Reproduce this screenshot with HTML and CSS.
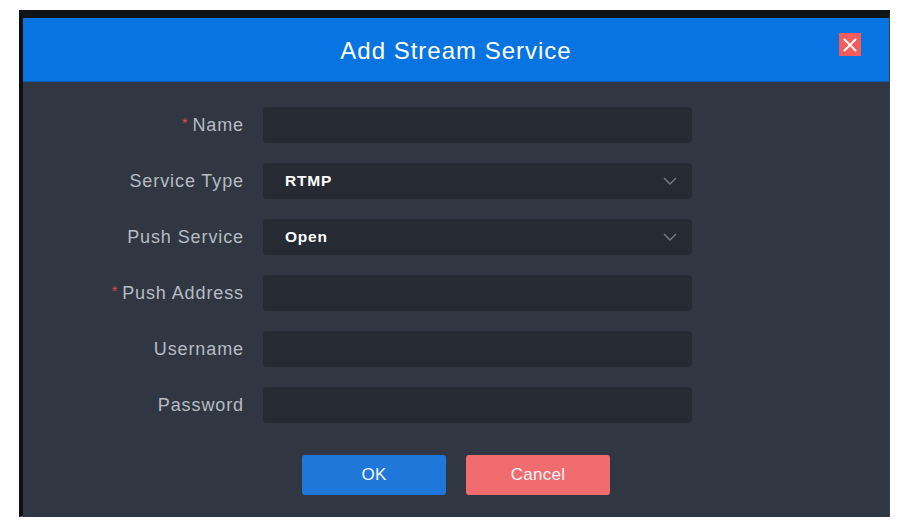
FILE: index.html
```html
<!DOCTYPE html>
<html>
<head>
<meta charset="utf-8">
<link rel="stylesheet" href="styles.css">
</head>
<body>
<div class="frame">
  <div class="dialog">
    <div class="header">
      <h1 class="title">Add Stream Service</h1>
      <button class="close" aria-label="close">
        <svg width="14" height="14" viewBox="0 0 14 14"><path d="M1.5 1.5 L12.5 12.5 M12.5 1.5 L1.5 12.5" stroke="#ffffff" stroke-width="2" fill="none" stroke-linecap="round"/></svg>
      </button>
    </div>
    <div class="body">
      <div class="row">
        <label class="label"><span class="req">*</span>Name</label>
        <div class="field"></div>
      </div>
      <div class="row">
        <label class="label">Service Type</label>
        <div class="field select"><span class="value">RTMP</span>
          <svg class="chev" width="14" height="8" viewBox="0 0 14 8"><polyline points="1,1 7,7 13,1" fill="none" stroke="#767c86" stroke-width="1.4"/></svg>
        </div>
      </div>
      <div class="row">
        <label class="label">Push Service</label>
        <div class="field select"><span class="value">Open</span>
          <svg class="chev" width="14" height="8" viewBox="0 0 14 8"><polyline points="1,1 7,7 13,1" fill="none" stroke="#767c86" stroke-width="1.4"/></svg>
        </div>
      </div>
      <div class="row">
        <label class="label"><span class="req">*</span>Push Address</label>
        <div class="field"></div>
      </div>
      <div class="row">
        <label class="label">Username</label>
        <div class="field"></div>
      </div>
      <div class="row">
        <label class="label">Password</label>
        <div class="field"></div>
      </div>
      <div class="actions">
        <button class="btn ok">OK</button>
        <button class="btn cancel">Cancel</button>
      </div>
    </div>
  </div>
</div>
</body>
</html>
```

FILE: styles.css
```css
html, body {
  margin: 0;
  padding: 0;
  background: #ffffff;
}
body {
  font-family: "Liberation Sans", Arial, sans-serif;
  padding: 10px 0 0 19px;
}
.frame {
  width: 866px;
  height: 498px;
  background: #0f1215;
  border-top: 8px solid #111417;
  border-left: 4px solid #0d1013;
  border-right: 1px solid #3a3f47;
  border-bottom: 1px solid #8b8e93;
}
.dialog {
  width: 866px;
  height: 499px;
  display: flex;
  flex-direction: column;
  background: #303743;
}
.header {
  position: relative;
  height: 64px;
  background: #0874e1;
  display: flex;
  align-items: center;
  justify-content: center;
  border-bottom: 1px solid #0a5fb5;
  box-sizing: border-box;
}
.title {
  margin: 0;
  font-size: 24px;
  font-weight: normal;
  color: #ffffff;
  letter-spacing: 1px;
  padding-top: 2px;
}
.close {
  position: absolute;
  right: 28px;
  top: 15px;
  width: 22px;
  height: 23px;
  padding: 0;
  border: none;
  background: #f45b5b;
  display: flex;
  align-items: center;
  justify-content: center;
}
.body {
  flex: 1;
  padding-top: 25px;
  display: flex;
  flex-direction: column;
  gap: 20px;
}
.row {
  display: flex;
  align-items: center;
  height: 36px;
}
.label {
  width: 221px;
  margin-right: 19px;
  text-align: right;
  font-size: 18px;
  letter-spacing: 0.9px;
  color: #b7bbc2;
}
.req {
  color: #e5484d;
  font-size: 14px;
  position: relative;
  top: -3px;
  margin-right: 4px;
}
.field {
  width: 429px;
  height: 36px;
  background: #262a32;
  border-radius: 4px;
  box-sizing: border-box;
  display: flex;
  align-items: center;
  padding: 0 15px 0 22px;
}
.value {
  flex: 1;
  color: #ffffff;
  font-weight: bold;
  font-size: 15.5px;
  letter-spacing: 0.8px;
}
.chev {
  display: block;
}
.actions {
  margin-top: 12px;
  display: flex;
  justify-content: center;
  gap: 20px;
}
.btn {
  width: 144px;
  height: 40px;
  border: none;
  border-radius: 3px;
  color: #f4f6f9;
  font-family: "Liberation Sans", Arial, sans-serif;
  font-size: 17px;
  letter-spacing: 0.3px;
}
.ok {
  background: #1f78d9;
}
.cancel {
  background: #f06c6e;
}
```
